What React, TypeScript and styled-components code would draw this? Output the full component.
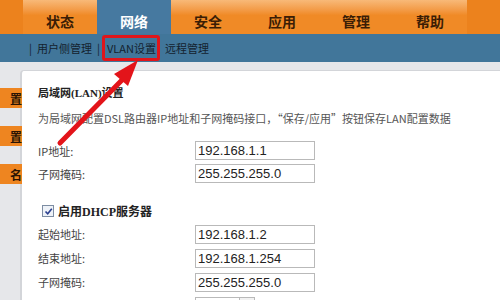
import styled, { createGlobalStyle } from 'styled-components';

const GlobalStyle = createGlobalStyle`
  html, body {
    margin: 0;
    padding: 0;
    background: #fff;
  }
  body {
    font-family: "Noto Sans CJK SC", "DejaVu Sans", sans-serif;
  }
`;

const Page = styled.div`
  position: relative;
  width: 500px;
  height: 300px;
  overflow: hidden;
  background: #e6e7ea;
`;

const TopBar = styled.div`
  display: flex;
  height: 34px;
  background: #ee8520;
`;

const Cap = styled.div<{ $w: number }>`
  width: ${(p) => p.$w}px;
  flex-shrink: 0;
  background: #ec821d;
`;

const Tab = styled.div<{ $active?: boolean }>`
  width: 74px;
  flex-shrink: 0;
  display: flex;
  align-items: flex-end;
  justify-content: center;
  padding-bottom: 3px;
  box-sizing: border-box;
  font-size: 14px;
  font-weight: 700;
  color: ${(p) => (p.$active ? '#ffffff' : '#3b1d05')};
  background: ${(p) =>
    p.$active
      ? '#4679a0'
      : 'linear-gradient(180deg, #f8b978 0%, #f39a45 30%, #f08a26 45%, #f08a26 100%)'};
`;

const SubBar = styled.div`
  display: flex;
  align-items: center;
  height: 28px;
  padding-left: 29px;
  background: #41769a;
  font-size: 11px;
  line-height: 16px;
  color: #14222e;
  gap: 5px;
`;

const Sep = styled.span`
  color: #14222e;
`;

const SubItem = styled.span<{ $boxed?: boolean }>`
  position: relative;
  ${(p) =>
    p.$boxed &&
    `
    margin: 0 4px 0 2px;
    &::after {
      content: '';
      position: absolute;
      left: -5px;
      right: -4px;
      top: -5px;
      bottom: -5px;
      border: 3px solid #e0161b;
      border-radius: 3px;
    }
  `}
`;

const Body = styled.div`
  display: flex;
  padding-top: 8px;
  height: 230px;
`;

const Side = styled.div`
  width: 20px;
  flex-shrink: 0;
  display: flex;
  flex-direction: column;
  gap: 18px;
  padding-top: 18px;
`;

const SideTab = styled.div`
  width: 22px;
  height: 20px;
  background: #ee8520;
  display: flex;
  align-items: center;
  justify-content: flex-end;
  font-size: 12px;
  font-weight: 700;
  color: #2a1404;
  position: relative;
  z-index: 1;
`;

const Panel = styled.div`
  flex: 1;
  background: #fff;
  border-left: 2px solid #d3d5d9;
  border-top: 1px solid #d3d5d9;
  border-top-left-radius: 4px;
  padding: 14px 0 0 16px;
  font-size: 11px;
  color: #333;
`;

const Title = styled.div`
  font-family: "Liberation Serif", "Noto Sans CJK SC", serif;
  font-weight: 700;
  font-size: 11px;
  line-height: 16px;
  color: #222;
`;

const Desc = styled.div`
  margin-top: 9px;
  line-height: 16px;
  color: #555;
  white-space: nowrap;
`;

const Form = styled.div<{ $top: number; $row: number }>`
  display: grid;
  grid-template-columns: 157px 120px;
  grid-auto-rows: ${(p) => p.$row}px;
  align-items: center;
  margin-top: ${(p) => p.$top}px;
`;

const Label = styled.div`
  color: #444;
  font-size: 11px;
`;

const Field = styled.div`
  height: 19px;
  box-sizing: border-box;
  border: 1px solid #b9b9b9;
  padding-left: 2px;
  font-family: "Liberation Sans", Arial, sans-serif;
  font-size: 13px;
  line-height: 17px;
  color: #222;
  background: #fff;
`;

const SelectField = styled.div`
  width: 60px;
  height: 19px;
  box-sizing: border-box;
  border: 1px solid #b9b9b9;
  display: flex;
  justify-content: flex-end;
`;

const SelectBtn = styled.div`
  width: 14px;
  border-left: 1px solid #b9b9b9;
  background: #f2f2f2;
`;

const CheckRow = styled.div`
  display: flex;
  align-items: center;
  gap: 4px;
  margin-top: 17px;
  margin-left: 4px;
  height: 18px;
  font-family: "Liberation Serif", "Noto Sans CJK SC", serif;
  font-weight: 700;
  font-size: 12px;
  color: #222;
`;

const Box = styled.span`
  width: 10px;
  height: 10px;
  border: 1px solid #7d8da3;
  background: #eef2f8;
  display: flex;
  align-items: center;
  justify-content: center;
`;

const Arrow = styled.svg`
  position: absolute;
  left: 0;
  top: 0;
  pointer-events: none;
`;

export default function App() {
  const tabs = ['状态', '网络', '安全', '应用', '管理', '帮助'];
  return (
    <Page>
      <GlobalStyle />
      <TopBar>
        <Cap $w={23} />
        {tabs.map((t) => (
          <Tab key={t} $active={t === '网络'}>
            {t}
          </Tab>
        ))}
        <Cap $w={33} />
      </TopBar>
      <SubBar>
        <Sep>|</Sep>
        <SubItem>用户侧管理</SubItem>
        <Sep>|</Sep>
        <SubItem $boxed>VLAN设置</SubItem>
        <SubItem>远程管理</SubItem>
      </SubBar>
      <Body>
        <Side>
          <SideTab>置</SideTab>
          <SideTab>置</SideTab>
          <SideTab>名</SideTab>
        </Side>
        <Panel>
          <Title>局域网(LAN)设置</Title>
          <Desc>
            为局域网配置DSL路由器IP地址和子网掩码接口，“保存/应用”按钮保存LAN配置数据
          </Desc>
          <Form $top={13} $row={23}>
            <Label>IP地址:</Label>
            <Field>192.168.1.1</Field>
            <Label>子网掩码:</Label>
            <Field>255.255.255.0</Field>
          </Form>
          <CheckRow>
            <Box>
              <svg width="9" height="9" viewBox="0 0 9 9">
                <path d="M1.5 4.5 L3.7 6.8 L7.8 1.8" stroke="#2a3f8f" strokeWidth="1.6" fill="none" />
              </svg>
            </Box>
            启用DHCP服务器
          </CheckRow>
          <Form $top={2} $row={24}>
            <Label>起始地址:</Label>
            <Field>192.168.1.2</Field>
            <Label>结束地址:</Label>
            <Field>192.168.1.254</Field>
            <Label>子网掩码:</Label>
            <Field>255.255.255.0</Field>
            <Label />
            <SelectField>
              <SelectBtn />
            </SelectField>
          </Form>
        </Panel>
      </Body>
      <Arrow width="500" height="300" viewBox="0 0 500 300">
        <line x1="60" y1="143" x2="124" y2="78" stroke="#e3141a" strokeWidth="5" strokeLinecap="round" />
        <polygon points="138,60 114,74 128,86" fill="#e3141a" />
      </Arrow>
    </Page>
  );
}
